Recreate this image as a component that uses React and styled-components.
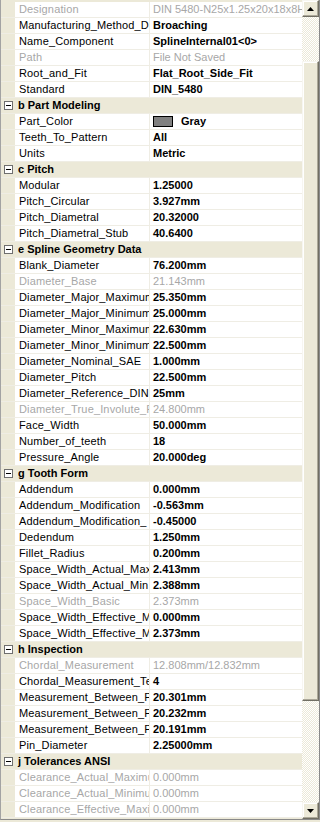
import styled, { createGlobalStyle } from "styled-components";

const GlobalStyle = createGlobalStyle`
  html, body {
    margin: 0;
    padding: 0;
    background: #ece9d8;
  }
  * {
    box-sizing: border-box;
  }
`;

const BEIGE = "#ece9d8";
const LINE = "#efede4";
const GRAY_TEXT = "#a7a7a7";

// names are cut where the grid column cuts them
const rows = [
  { name: "Designation", value: "DIN 5480-N25x1.25x20x18x8H", readOnly: true },
  { name: "Manufacturing_Method_D", value: "Broaching" },
  { name: "Name_Component", value: "SplineInternal01<0>" },
  { name: "Path", value: "File Not Saved", readOnly: true },
  { name: "Root_and_Fit", value: "Flat_Root_Side_Fit" },
  { name: "Standard", value: "DIN_5480" },
  { category: "b Part Modeling" },
  { name: "Part_Color", value: "Gray", swatch: "#808080" },
  { name: "Teeth_To_Pattern", value: "All" },
  { name: "Units", value: "Metric" },
  { category: "c Pitch" },
  { name: "Modular", value: "1.25000" },
  { name: "Pitch_Circular", value: "3.927mm" },
  { name: "Pitch_Diametral", value: "20.32000" },
  { name: "Pitch_Diametral_Stub", value: "40.6400" },
  { category: "e Spline Geometry Data" },
  { name: "Blank_Diameter", value: "76.200mm" },
  { name: "Diameter_Base", value: "21.143mm", readOnly: true },
  { name: "Diameter_Major_Maximum", value: "25.350mm" },
  { name: "Diameter_Major_Minimum", value: "25.000mm" },
  { name: "Diameter_Minor_Maximum", value: "22.630mm" },
  { name: "Diameter_Minor_Minimum", value: "22.500mm" },
  { name: "Diameter_Nominal_SAE", value: "1.000mm" },
  { name: "Diameter_Pitch", value: "22.500mm" },
  { name: "Diameter_Reference_DIN", value: "25mm" },
  { name: "Diameter_True_Involute_F", value: "24.800mm", readOnly: true },
  { name: "Face_Width", value: "50.000mm" },
  { name: "Number_of_teeth", value: "18" },
  { name: "Pressure_Angle", value: "20.000deg" },
  { category: "g Tooth Form" },
  { name: "Addendum", value: "0.000mm" },
  { name: "Addendum_Modification", value: "-0.563mm" },
  { name: "Addendum_Modification_", value: "-0.45000" },
  { name: "Dedendum", value: "1.250mm" },
  { name: "Fillet_Radius", value: "0.200mm" },
  { name: "Space_Width_Actual_Max", value: "2.413mm" },
  { name: "Space_Width_Actual_Min", value: "2.388mm" },
  { name: "Space_Width_Basic", value: "2.373mm", readOnly: true },
  { name: "Space_Width_Effective_M", value: "0.000mm" },
  { name: "Space_Width_Effective_M", value: "2.373mm" },
  { category: "h Inspection" },
  { name: "Chordal_Measurement", value: "12.808mm/12.832mm", readOnly: true },
  { name: "Chordal_Measurement_Te", value: "4" },
  { name: "Measurement_Between_P", value: "20.301mm" },
  { name: "Measurement_Between_P", value: "20.232mm" },
  { name: "Measurement_Between_P", value: "20.191mm" },
  { name: "Pin_Diameter", value: "2.25000mm" },
  { category: "j Tolerances ANSI" },
  { name: "Clearance_Actual_Maximu", value: "0.000mm", readOnly: true },
  { name: "Clearance_Actual_Minimu", value: "0.000mm", readOnly: true },
  { name: "Clearance_Effective_Maxi", value: "0.000mm", readOnly: true },
];

const Frame = styled.div`
  display: flex;
  width: 320px;
  height: 820px;
  border-left: 1px solid #a3a3a3;
  border-right: 1px solid #8a8a8a;
  border-bottom: 1px solid #8a8a8a;
  background: ${BEIGE};
  font-family: "Liberation Sans", Arial, sans-serif;
  font-size: 11px;
  overflow: hidden;
`;

const Grid = styled.div`
  flex: 1;
  display: flex;
  flex-direction: column;
  padding-top: 2px;
  min-width: 0;
`;

const Row = styled.div`
  display: flex;
  height: 16px;
  flex: none;
  border-bottom: 1px solid ${LINE};
  background: ${(p) => (p.$category ? BEIGE : "#ffffff")};
`;

const Gutter = styled.div`
  width: 14px;
  flex: none;
  background: ${BEIGE};
  display: flex;
  align-items: center;
  justify-content: center;
  padding-left: 1px;
`;

const NameCell = styled.div`
  width: 135px;
  flex: none;
  padding-left: 4px;
  line-height: 15px;
  letter-spacing: 0.15px;
  white-space: nowrap;
  overflow: hidden;
  border-right: 1px solid ${LINE};
  color: ${(p) => (p.$readOnly ? GRAY_TEXT : "#000000")};
`;

const ValueCell = styled.div`
  flex: 1;
  min-width: 0;
  display: flex;
  align-items: center;
  gap: 8px;
  padding-left: 3px;
  line-height: 15px;
  white-space: nowrap;
  overflow: hidden;
  font-weight: ${(p) => (p.$readOnly ? "normal" : "bold")};
  color: ${(p) => (p.$readOnly ? GRAY_TEXT : "#000000")};
`;

const CategoryLabel = styled.div`
  padding-left: 3px;
  line-height: 15px;
  font-weight: bold;
  color: #000000;
  white-space: nowrap;
`;

const Swatch = styled.span`
  width: 20px;
  height: 11px;
  flex: none;
  border: 1px solid #000000;
  background: ${(p) => p.$color};
`;

const Scrollbar = styled.div`
  width: 17px;
  flex: none;
  display: flex;
  flex-direction: column;
  background-color: #ffffff;
  background-image: repeating-conic-gradient(#ece9d8 0 25%, #ffffff 0 50%);
  background-size: 2px 2px;
`;

const ArrowButton = styled.div`
  height: 17px;
  flex: none;
  display: flex;
  align-items: center;
  justify-content: center;
  background: ${BEIGE};
  border-top: 1px solid #f7f6f1;
  border-left: 1px solid #f7f6f1;
  border-right: 1px solid #716f64;
  border-bottom: 1px solid #716f64;
  box-shadow: inset -1px -1px 0 #aca899, inset 1px 1px 0 #ffffff;
`;

const Track = styled.div`
  height: ${(p) => p.$size}px;
  flex: none;
`;

const Thumb = styled.div`
  height: ${(p) => p.$size}px;
  flex: none;
  background: ${BEIGE};
  border-top: 1px solid #f7f6f1;
  border-left: 1px solid #f7f6f1;
  border-right: 1px solid #716f64;
  border-bottom: 1px solid #716f64;
  box-shadow: inset -1px -1px 0 #aca899, inset 1px 1px 0 #ffffff;
`;

const Spacer = styled.div`
  flex: 1;
`;

function MinusBox() {
  return (
    <svg width="9" height="9" viewBox="0 0 9 9">
      <rect x="0.5" y="0.5" width="8" height="8" fill="#ffffff" stroke="#6f6f6f" />
      <line x1="2" y1="4.5" x2="7" y2="4.5" stroke="#000000" />
    </svg>
  );
}

function Arrow({ down }) {
  return (
    <svg width="7" height="4" viewBox="0 0 7 4">
      <polygon points={down ? "0,0 7,0 3.5,4" : "0,4 7,4 3.5,0"} fill="#000000" />
    </svg>
  );
}

export default function App() {
  return (
    <>
      <GlobalStyle />
      <Frame>
        <Grid>
          {rows.map((row, i) =>
            row.category ? (
              <Row key={i} $category>
                <Gutter>
                  <MinusBox />
                </Gutter>
                <CategoryLabel>{row.category}</CategoryLabel>
              </Row>
            ) : (
              <Row key={i}>
                <Gutter />
                <NameCell $readOnly={row.readOnly}>{row.name}</NameCell>
                <ValueCell $readOnly={row.readOnly}>
                  {row.swatch && <Swatch $color={row.swatch} />}
                  {row.value}
                </ValueCell>
              </Row>
            )
          )}
        </Grid>
        <Scrollbar>
          <ArrowButton>
            <Arrow />
          </ArrowButton>
          <Track $size={44} />
          <Thumb $size={640} />
          <Spacer />
          <ArrowButton>
            <Arrow down />
          </ArrowButton>
        </Scrollbar>
      </Frame>
    </>
  );
}
